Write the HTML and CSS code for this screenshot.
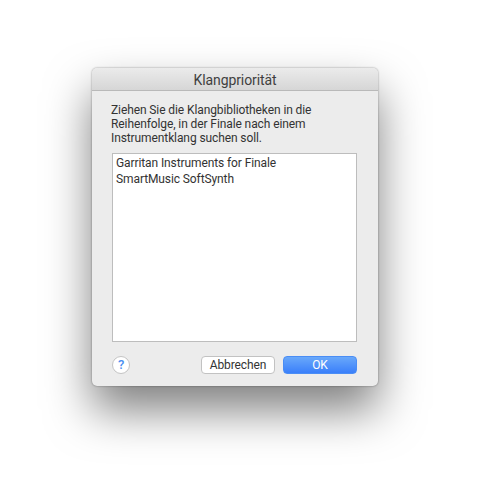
FILE: index.html
```html
<!doctype html>
<html>

<head>
	<meta charset="UTF-8">
	<title>Klangpriorität</title>
	<link rel="stylesheet" href="styles.css">
</head>

<body>

	<div class="dialog">
		<!-- Titelleiste -->
		<div class="titlebar">Klangpriorität</div>

		<div class="content">
			<p class="intro">Ziehen Sie die Klangbibliotheken in die<br>Reihenfolge, in der Finale nach einem<br>Instrumentklang suchen soll.</p>

			<div class="list">
				<div class="item">Garritan Instruments for Finale</div>
				<div class="item">SmartMusic SoftSynth</div>
			</div>

			<div class="footer">
				<div class="help">?</div>
				<div class="btn">Abbrechen</div>
				<div class="btn primary">OK</div>
			</div>
		</div>
	</div>

</body>

</html>
```

FILE: styles.css
```css
html,
body {
	margin: 0;
	padding: 0;
	height: 100%;
	background: #fff;
	overflow: hidden;
}

body {
	padding: 68px 0 0 92px;
	box-sizing: border-box;
	font-family: Roboto, "Liberation Sans", sans-serif;
	font-size: 12px;
	letter-spacing: -.1px;
	color: #333;
}

.dialog {
	width: 286px;
	height: 318px;
	background: #ececec;
	border-radius: 5px;
	box-shadow: 0 0 2px rgba(0, 0, 0, .45), 0 24px 46px rgba(0, 0, 0, .5);
	overflow: hidden;
	display: flex;
	flex-direction: column;
}

.titlebar {
	height: 22px;
	line-height: 24px;
	flex-shrink: 0;
	text-align: center;
	font-size: 14px;
	color: #3f3f3f;
	background: linear-gradient(#ebebeb, #d6d6d6);
	border-bottom: 1px solid #b9b9b9;
}

.content {
	flex: 1;
	padding: 12px 21px 12px 20px;
	display: flex;
	flex-direction: column;
}

.intro {
	margin: 0 0 0 -1px;
	height: 50px;
	line-height: 14px;
}

.list {
	height: 185px;
	background: #fff;
	border: 1px solid #bdbdbd;
	padding: 1px 3px;
}

.item {
	height: 16px;
	line-height: 16px;
}

.footer {
	display: flex;
	align-items: center;
	margin-top: 14px;
	gap: 8px;
}

.help {
	width: 16px;
	height: 16px;
	margin-right: auto;
	border: 1px solid #c4c4c4;
	border-radius: 50%;
	background: #fff;
	color: #4a8ff0;
	font-size: 13px;
	font-weight: 500;
	line-height: 16px;
	text-align: center;
}

.btn {
	width: 72px;
	height: 16px;
	border: 1px solid #c2c2c2;
	border-radius: 4px;
	background: #fff;
	line-height: 16px;
	text-align: center;
}

.primary {
	border-color: #4a8df5;
	background: linear-gradient(#69a8fa, #3a7ffa);
	color: #fff;
}
```
